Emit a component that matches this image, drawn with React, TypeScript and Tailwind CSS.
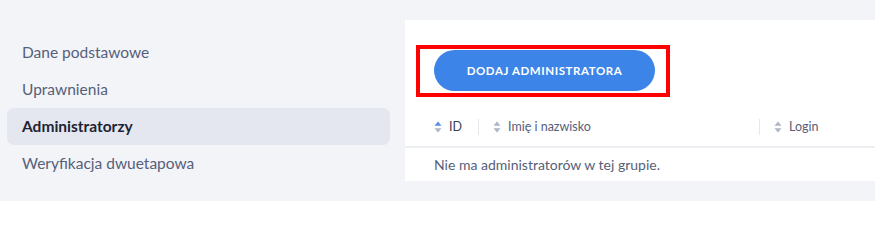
const font = { fontFamily: '"Source Sans Pro", Lato, "Noto Sans", sans-serif' };

function SortIcon({ active = false }: { active?: boolean }) {
  return (
    <svg width="8" height="12" viewBox="0 0 8 12" className="shrink-0">
      <path d="M4 0.5 L7.5 4.8 H0.5 Z" fill={active ? '#5a8de6' : '#aeb4c6'} />
      <path d="M4 11.5 L7.5 7.2 H0.5 Z" fill="#aeb4c6" />
    </svg>
  );
}

const menu = ['Dane podstawowe', 'Uprawnienia', 'Administratorzy', 'Weryfikacja dwuetapowa'];

export default function App() {
  return (
    <div className="w-[875px] h-[201px] bg-[#f3f4f8] flex overflow-hidden" style={font}>
      <div className="w-[383px] ml-[7px] pt-[34px] shrink-0">
        {menu.map(m => (
          <div
            key={m}
            className={
              m === 'Administratorzy'
                ? 'h-[37px] flex items-center pl-[15px] rounded-[7px] bg-[#e4e7f0] text-[15.5px] font-bold text-[#1e2433]'
                : 'h-[37px] flex items-center pl-[15px] text-[15.5px] text-[#56607a]'
            }
          >
            {m}
          </div>
        ))}
      </div>
      <div className="ml-[15px] mt-[20px] h-[161px] flex-1 bg-white">
        <div className="pt-[30px] pl-[29px]">
          <div className="relative inline-block">
            <div className="absolute left-[-18px] top-[-5px] w-[254px] h-[52px] border-4 border-[#ff0000]" />
            <button className="relative h-[41px] w-[221px] rounded-full bg-[#3d84e8] text-white text-[11.5px] font-bold tracking-[0.05em]">
              DODAJ ADMINISTRATORA
            </button>
          </div>
        </div>
        <div className="mt-[22px] h-[35px] pb-[5px] border-b-2 border-[#eceef2] flex items-center text-[12.5px] text-[#56607a]">
          <div className="w-[73px] pl-[29px] flex items-center gap-[7px] text-[#3a4256]">
            <SortIcon active />
            <span>ID</span>
          </div>
          <div className="h-[16px] w-px bg-[#e6e8ee]" />
          <div className="w-[280px] pl-[14px] flex items-center gap-[7px]">
            <SortIcon />
            <span>Imię i nazwisko</span>
          </div>
          <div className="h-[16px] w-px bg-[#e6e8ee]" />
          <div className="pl-[14px] flex items-center gap-[7px]">
            <SortIcon />
            <span>Login</span>
          </div>
        </div>
        <div className="h-[32px] flex items-center pl-[29px] text-[14px] text-[#56607a]">
          Nie ma administratorów w tej grupie.
        </div>
      </div>
    </div>
  );
}
